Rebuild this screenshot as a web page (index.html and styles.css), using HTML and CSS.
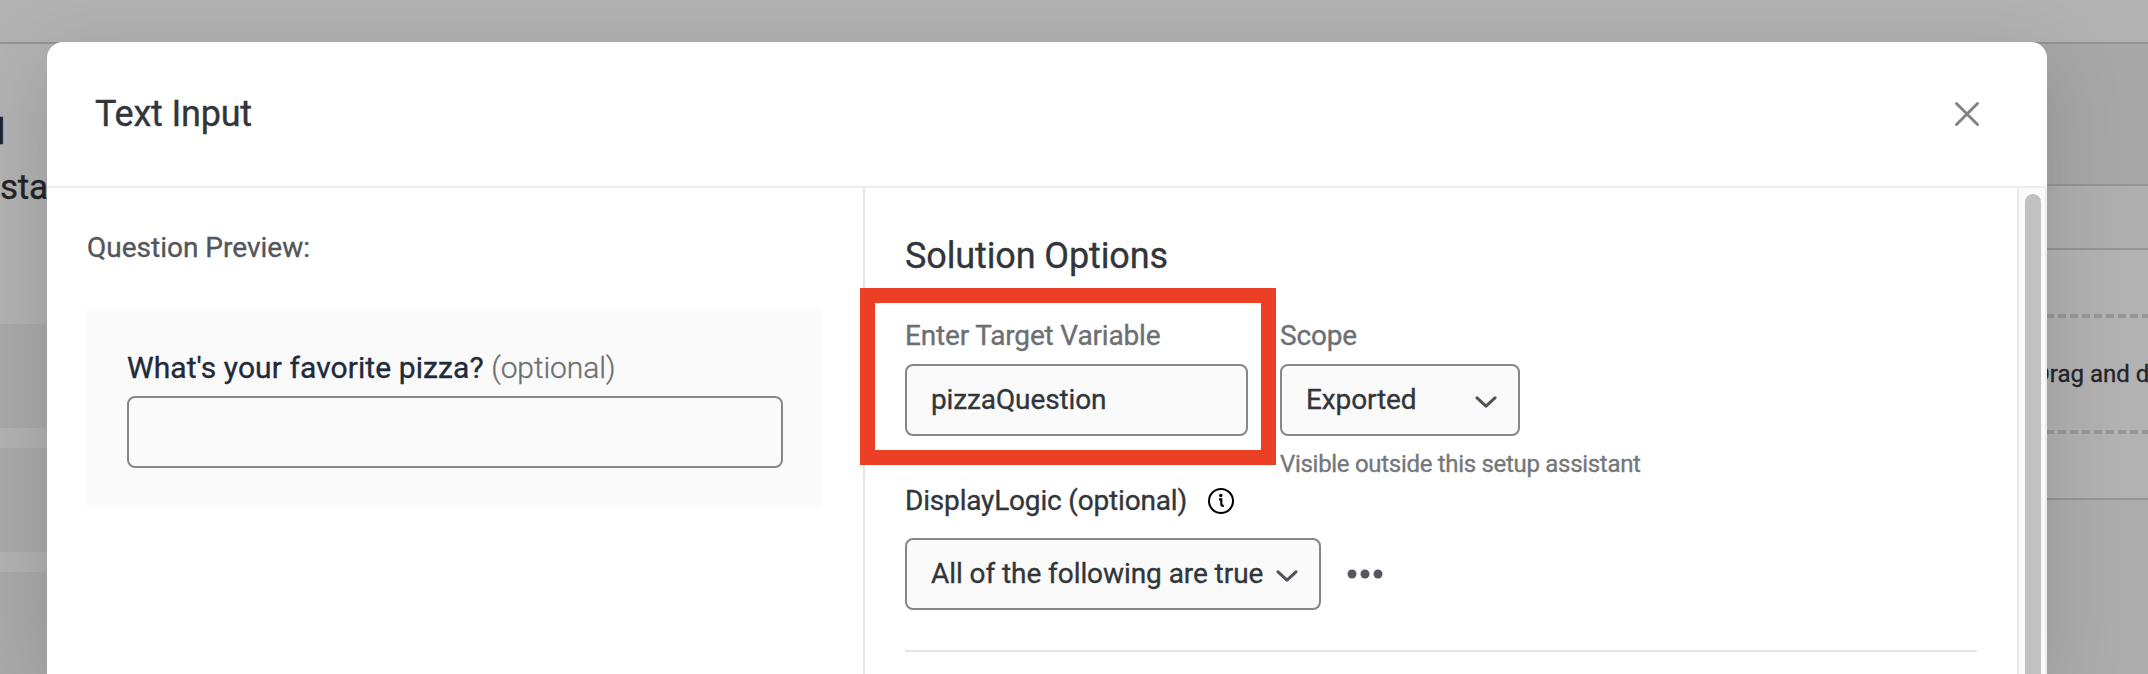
FILE: index.html
```
<!DOCTYPE html>
<html lang="en">
<head>
<meta charset="utf-8">
<title>Text Input</title>
<link rel="stylesheet" href="styles.css">
</head>
<body>
<div class="page" aria-hidden="true">
  <div class="topbar"></div>
  <div class="page-main">
    <aside class="sidebar">
      <div class="side-title">l</div>
      <div class="side-sub">sta</div>
      <div class="side-list"><i></i><i></i><i></i></div>
    </aside>
    <section class="canvas">
      <div class="canvas-head"></div>
      <div class="canvas-tabs"></div>
      <div class="canvas-drop">
        <div class="dash"></div>
        <div class="drop-text">Drag and d</div>
        <div class="dash"></div>
      </div>
      <div class="canvas-foot"></div>
    </section>
  </div>
</div>
<main class="modal">
  <header class="modal-head">
    <h1 class="modal-title">Text Input</h1>
    <svg class="close" viewBox="0 0 26 26"><path d="M2.500 2.500l21 21M23.500 2.500l-21 21"/></svg>
  </header>
  <div class="modal-body">
    <section class="preview">
      <div class="preview-label">Question Preview:</div>
      <div class="preview-box">
        <div class="question">What's your favorite pizza? <span class="optional">(optional)</span></div>
        <div class="field"></div>
      </div>
    </section>
    <section class="options">
      <h2 class="options-title">Solution Options</h2>
      <div class="row">
        <div class="col target">
          <div class="label">Enter Target Variable</div>
          <div class="field">pizzaQuestion</div>
          <div class="highlight"></div>
        </div>
        <div class="col scope">
          <div class="label">Scope</div>
          <div class="field"><span>Exported</span><svg class="chev" viewBox="0 0 22 12"><path d="M2 1.800l9 8.400 9-8.400"/></svg></div>
          <div class="hint">Visible outside this setup assistant</div>
        </div>
      </div>
      <div class="logic-label">DisplayLogic (optional)
        <svg class="info" viewBox="0 0 26 26"><circle cx="13" cy="13" r="12"/><path class="info-i" d="M11 11.300h2.300v5q0 1.700 2.500 1.500"/><circle class="info-dot" cx="12.800" cy="7.500" r="1.700"/></svg>
      </div>
      <div class="logic-row">
        <div class="field logic"><span>All of the following are true</span><svg class="chev" viewBox="0 0 22 12"><path d="M2 1.800l9 8.400 9-8.400"/></svg></div>
        <svg class="dots" viewBox="0 0 36 10"><circle cx="5" cy="5" r="4.500"/><circle cx="18" cy="5" r="4.500"/><circle cx="31" cy="5" r="4.500"/></svg>
      </div>
      <div class="rule"></div>
    </section>
    <div class="scroll"><div class="thumb"></div></div>
  </div>
</main>
</body>
</html>
```
FILE: styles.css
```
* { box-sizing: border-box; }
body { margin: 0; width: 2148px; height: 674px; overflow: hidden; position: relative; background: #b2b2b2; font-family: Roboto, "Liberation Sans", sans-serif; font-size: 28px; color: #32363a; letter-spacing: -.12px; -webkit-text-stroke: .35px currentColor; }
h1, h2 { margin: 0; font-weight: 400; }

/* Dimmed page behind the dialog */
.page { height: 674px; display: flex; flex-direction: column; }
.topbar { height: 44px; flex: none; border-bottom: 2px solid #939393; }
.page-main { flex: 1; min-height: 0; display: flex; justify-content: space-between; overflow: hidden; }
.sidebar { width: 400px; display: flex; flex-direction: column; color: #222428; }
.side-title { height: 112px; flex: none; padding-top: 64px; margin-left: -4px; font-size: 36px; font-weight: 500; line-height: 48px; }
.side-sub { height: 168px; flex: none; font-size: 35px; line-height: 64px; padding-left: 0; letter-spacing: -.3px; }
.side-list { flex: 1; min-height: 0; display: flex; flex-direction: column; gap: 20px; overflow: hidden; }
.side-list i { height: 104px; background: #aaa; flex: none; }
.canvas { width: 200px; display: flex; flex-direction: column; }
.canvas-head { height: 142px; background: #a7a7a7; border-bottom: 2px solid #959595; }
.canvas-tabs { height: 64px; background: #afafaf; border-bottom: 2px solid #959595; }
.canvas-drop { height: 250px; padding-top: 64px; border-bottom: 2px solid #959595; }
.dash { height: 4px; background: repeating-linear-gradient(90deg, #96979a 0 8px, transparent 8px 12px) 2px 0; }
.drop-text { height: 112px; line-height: 112px; padding-left: 86px; font-size: 24px; color: #22252b; white-space: nowrap; overflow: hidden; letter-spacing: 0; }
.canvas-foot { flex: 1; background: #adadad; }

/* Dialog */
.modal { position: absolute; left: 47px; top: 42px; width: 2000px; height: 632px; background: #fff; border-radius: 16px 16px 0 0; box-shadow: 0 20px 80px rgba(0,0,0,.15); display: flex; flex-direction: column; }
.modal-head { height: 146px; flex: none; border-bottom: 2px solid #ededed; display: flex; align-items: center; justify-content: space-between; padding: 0 67px 0 48px; }
.modal-title { font-size: 36px; line-height: 48px; letter-spacing: -.2px; }
.close { width: 26px; height: 26px; fill: none; stroke: #828282; stroke-width: 3; stroke-linecap: round; }
.modal-body { flex: 1; display: flex; min-height: 0; }
.preview { width: 816px; padding: 40px; }
.preview-label { height: 80px; line-height: 40px; color: #53565b; letter-spacing: 0; }
.preview-box { height: 200px; background: #fafafa; padding: 40px; }
.question { height: 48px; line-height: 40px; font-size: 30px; color: #212b3a; white-space: nowrap; letter-spacing: .08px; }
.optional { color: #6f7073; font-weight: 300; letter-spacing: -.1px; }
.field { height: 72px; border: 2px solid #878787; border-radius: 8px; background: #fafafa; display: flex; align-items: center; padding: 0 24px; line-height: 40px; white-space: nowrap; }
.options { width: 1154px; border-left: 2px solid #e5e5ea; padding: 42px 40px 0; }
.options-title { height: 84px; font-size: 36px; line-height: 52px; }
.row { display: flex; gap: 32px; height: 168px; }
.col { position: relative; }
.target { width: 343px; }
.label { height: 50px; line-height: 44px; color: #6d6f73; letter-spacing: -.17px; }
.highlight { position: absolute; left: -45px; top: -26px; width: 416px; height: 177px; border: 15px solid #eb4026; z-index: 2; }
.scope .field { width: 240px; justify-content: space-between; padding-right: 21px; }
.chev { width: 22px; height: 12px; fill: none; stroke: #50535a; stroke-width: 3; stroke-linecap: round; stroke-linejoin: round; flex: none; margin-top: 3px; }
.hint { font-size: 24px; line-height: 32px; padding-top: 12px; color: #75777a; white-space: nowrap; letter-spacing: -.3px; }
.logic-label { height: 56px; display: flex; align-items: flex-start; line-height: 38px; gap: 21px; letter-spacing: -.18px; }
.info { width: 26px; height: 26px; margin-top: 6px; fill: none; stroke: #000; stroke-width: 2; }
.info-i { stroke-width: 2.2; }
.info-dot { fill: #000; stroke: none; }
.logic-row { display: flex; align-items: center; gap: 26px; letter-spacing: -.07px; }
.logic { width: 416px; justify-content: space-between; padding-right: 21px; }
.dots { width: 36px; height: 10px; fill: #55585f; }
.rule { height: 2px; background: #e5e5ea; margin-top: 40px; }
.scroll { width: 30px; background: #fafafa; border-left: 2px solid #e8e8e8; border-right: 2px solid #ededed; padding: 6px 4px 0 6px; overflow: hidden; }
.thumb { height: 600px; background: #c1c1c1; border-radius: 8px; }
```
